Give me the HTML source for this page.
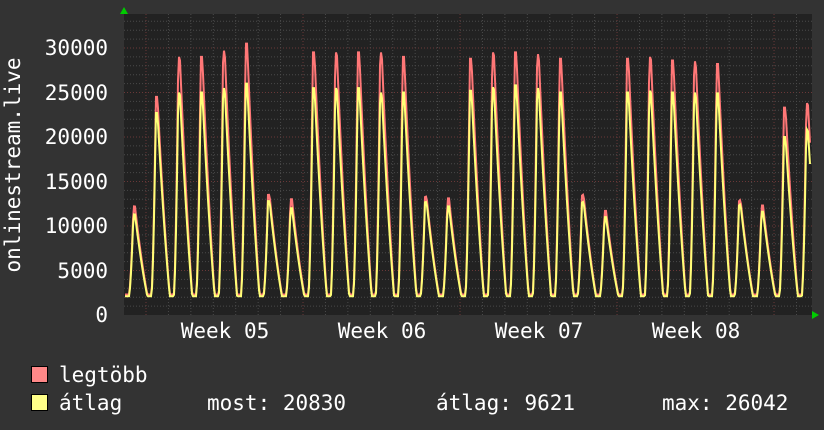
<!DOCTYPE html>
<html><head><meta charset="utf-8"><style>
body{margin:0;background:#333;width:824px;height:430px;overflow:hidden}
svg{display:block}
text{font-family:"DejaVu Sans Mono","Liberation Mono",monospace;font-size:21px;fill:#fff}
</style></head><body>
<svg id="s" width="824" height="430" xmlns="http://www.w3.org/2000/svg">
<rect width="824" height="430" fill="#333"/>
<rect x="124" y="14" width="688" height="301" fill="#222"/>
<g id="grid"></g>
<polyline id="mx" fill="none" stroke="#f77" stroke-width="2"/>
<polyline id="av" fill="none" stroke="#ff7" stroke-width="2"/>
<polygon points="120,14 128,14 124,7" fill="#0c0"/>
<polygon points="812,311 812,319 819,315" fill="#0c0"/>
<g text-anchor="end">
<text x="108" y="55">30000</text><text x="108" y="100">25000</text><text x="108" y="144">20000</text>
<text x="108" y="189">15000</text><text x="108" y="233">10000</text><text x="108" y="278">5000</text><text x="108" y="322">0</text>
</g>
<text transform="translate(20,165) rotate(-90)" text-anchor="middle">onlinestream.live</text>
<g text-anchor="middle">
<text x="225" y="338">Week 05</text><text x="382" y="338">Week 06</text><text x="539" y="338">Week 07</text><text x="696" y="338">Week 08</text>
</g>
<rect x="31.5" y="366.5" width="16" height="16" fill="#f88" stroke="#000"/>
<rect x="31.5" y="394.5" width="16" height="16" fill="#ff8" stroke="#000"/>
<text x="59" y="382">legtöbb</text>
<text x="59" y="410">átlag</text>
<text x="207" y="410">most: 20830</text>
<text x="436" y="410">átlag: 9621</text>
<text x="662" y="410">max: 26042</text>
</svg>
<script>
var g=document.getElementById('grid'),h='';
function Y(v){return 315-v*267/30000;}
for(var v=1000;v<=33000;v+=1000){var y=Y(v);if(y<14)break;var maj=v%5000==0;
h+='<line x1="124" x2="812" y1="'+y+'" y2="'+y+'" stroke="'+(maj?'#6a3838':'#4a4a4a')+'" stroke-dasharray="1,2"/>';}
var d=22.43;
for(var i=0;i<31;i++){var x=124+i*d+22;if(x>812)break;var maj=i%7==0;
h+='<line y1="14" y2="315" x1="'+x+'" x2="'+x+'" stroke="'+(maj?'#6a3838':'#4a4a4a')+'" stroke-dasharray="1,2"/>';}
g.innerHTML=h;
var P=[[12200,11300],[24500,22700],[29000,25000],[29000,25000],[29700,25500],[30500,26000],[13500,12800],[13000,12000],[29500,25500],[29500,25500],[29500,25500],[29500,25000],[29000,25000],[13300,12700],[13100,12200],[28800,25200],[29500,25600],[29500,25800],[29300,25500],[28800,25000],[13500,12700],[11700,11000],[28800,25000],[29000,25200],[28600,25000],[28500,25000],[28200,24900],[12900,12400],[12300,11600],[23300,20000],[23800,20830]];
function val(x,k){var t=(x-124)/d;var pk=t-0.42;var q=pk-Math.floor(pk);
var base=k?2100:2300;
var a=Math.floor(pk),b=a+1;
var peakA=P[Math.max(0,Math.min(30,a))][k],peakB=P[Math.max(0,Math.min(30,b))][k];
if(q<0.07)return peakA;
if(q<0.62){var r=(q-0.07)/0.55;return base+(peakA-base)*(1-r)*(1-0.35*Math.sin(Math.PI*r)*0+0)*(0.75+0.25*(1-r))*(1/0.75)*0.75+ (peakA-base)*0*r;}
if(q<0.8)return base;
var r=(q-0.8)/0.2;return base+(peakB-base)*Math.pow(r,1.6);}
var m='',a='';
for(var x=125;x<=810;x+=1){m+=x+','+Y(val(x,0)).toFixed(1)+' ';a+=x+','+Y(val(x,1)).toFixed(1)+' ';}
document.getElementById('mx').setAttribute('points',m);
document.getElementById('av').setAttribute('points',a);
</script>
</body></html>
